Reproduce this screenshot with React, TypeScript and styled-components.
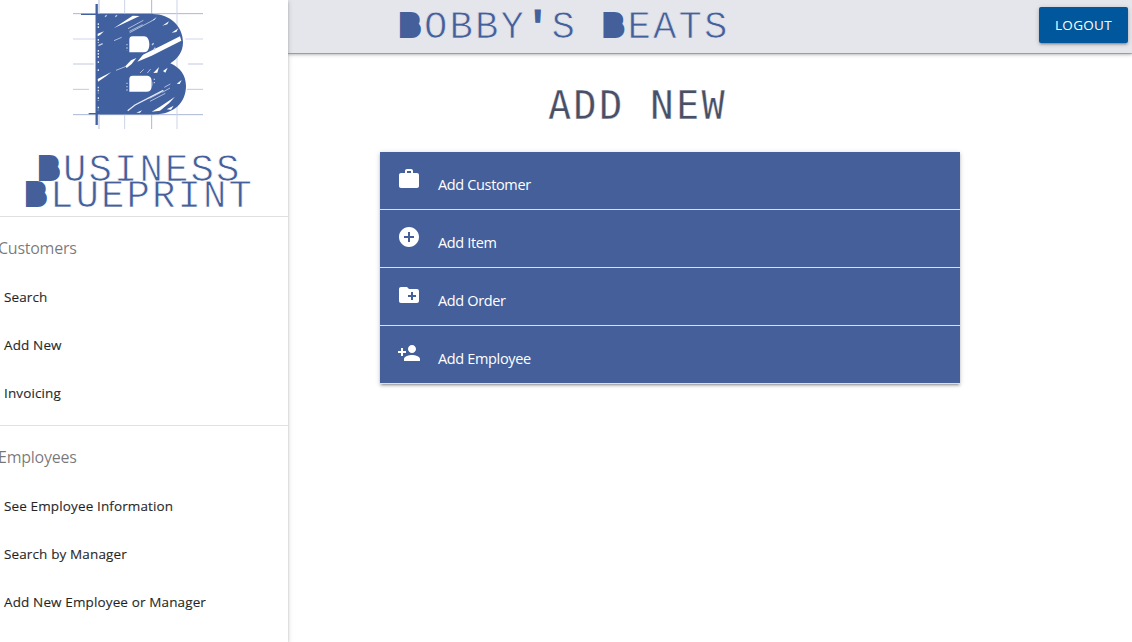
import React from "react";
import styled, { createGlobalStyle } from "styled-components";
import { MdWork, MdAddCircle, MdCreateNewFolder, MdPersonAdd } from "react-icons/md";

const BLUE = "#455f9b";
const HEADER_BG = "#e5e6eb";

const GlobalStyle = createGlobalStyle`
  * { box-sizing: border-box; }
  body { margin: 0; background: #fff; overflow: hidden; font-family: "Open Sans", "Noto Sans", sans-serif; }
`;

const Page = styled.div`
  display: flex;
  width: 100%;
  height: 642px;
  overflow: hidden;
`;

const Sidebar = styled.aside`
  flex: 0 0 288px;
  height: 100%;
  background: #fff;
  z-index: 2;
  box-shadow: 0 2px 2px 0 rgba(0, 0, 0, 0.14), 0 3px 1px -2px rgba(0, 0, 0, 0.12), 0 1px 5px 0 rgba(0, 0, 0, 0.2);
`;

const Brand = styled.div`
  height: 217px;
  border-bottom: 1px solid #e0e0e0;
`;

const Logo = styled.svg`
  display: block;
  width: 160px;
  height: 135px;
  margin-left: 60px;
`;

const Wordmark = styled.div<{ $bg: string }>`
  font-family: "Liberation Mono", monospace;
  font-size: 39px;
  line-height: 25.5px;
  letter-spacing: 2.1px;
  color: ${BLUE};
  white-space: pre;
  -webkit-text-stroke: 0.75px ${(p) => p.$bg};
`;

const Solid = styled.span`
  display: inline-block;
  width: 25px;
  padding-left: 2px;
  font-size: 29px;
  line-height: 0;
  letter-spacing: 0;
  font-weight: 700;
  vertical-align: 3px;
  -webkit-text-stroke: 6px ${BLUE};
`;

const Apostrophe = styled.span`
  font-weight: 700;
  -webkit-text-stroke: 1px ${BLUE};
`;

const BrandLines = styled.div`
  padding: 24px 0 0 25px;
`;

const BrandLine = styled(Wordmark)<{ $indent?: number }>`
  padding-left: ${(p) => p.$indent ?? 0}px;
`;

const NavSection = styled.nav`
  height: 208px;
  padding-top: 7px;

  & + & {
    border-top: 1px solid #e0e0e0;
  }
`;

const NavHeading = styled.div`
  height: 48px;
  line-height: 48px;
  margin-left: -2px;
  font-size: 16px;
  letter-spacing: -0.25px;
  color: rgba(0, 0, 0, 0.54);
`;

const NavLink = styled.a`
  display: block;
  height: 48px;
  padding-left: 4px;
  line-height: 50px;
  font-size: 13.5px;
  letter-spacing: 0.13px;
  white-space: nowrap;
  color: rgba(0, 0, 0, 0.84);
  -webkit-text-stroke: 0.2px rgba(0, 0, 0, 0.8);
`;

const Main = styled.main`
  flex: 1;
  min-width: 0;
`;

const Header = styled.header`
  display: flex;
  justify-content: space-between;
  height: 53px;
  padding: 7px 4px 0 111px;
  background: ${HEADER_BG};
  box-shadow: 0 2px 2px 0 rgba(0, 0, 0, 0.14), 0 1px 0 0 rgba(0, 0, 0, 0.2), 0 1px 5px 0 rgba(0, 0, 0, 0.2);
`;

const Company = styled(Wordmark)`
  line-height: 42px;
`;

const LogoutButton = styled.button`
  width: 89px;
  height: 36px;
  padding: 0;
  border: 0;
  border-radius: 2px;
  background: #01579b;
  color: #fff;
  font: 13.5px/36px "Open Sans", sans-serif;
  letter-spacing: 0.3px;
  box-shadow: 0 2px 2px 0 rgba(0, 0, 0, 0.14), 0 3px 1px -2px rgba(0, 0, 0, 0.12), 0 1px 5px 0 rgba(0, 0, 0, 0.2);
`;

const Title = styled.h1`
  margin: 25px 0 0 260px;
  height: 57px;
  font: 400 38.5px/55px "DejaVu Sans Mono", monospace;
  letter-spacing: 2.4px;
  color: #484f66;
  white-space: pre;
  -webkit-text-stroke: 0.3px #fff;
`;

const Collection = styled.div`
  width: 580px;
  margin: 17px 0 0 92px;
  box-shadow: 0 2px 2px 0 rgba(0, 0, 0, 0.14), 0 3px 1px -2px rgba(0, 0, 0, 0.12), 0 1px 5px 0 rgba(0, 0, 0, 0.2);
`;

const Item = styled.a`
  display: flex;
  height: 58px;
  padding: 15px 17px 0;
  gap: 17px;
  background: ${BLUE};
  border-bottom: 1px solid #e0e0e0;
  color: #fff;
`;

const ItemLabel = styled.span`
  padding-top: 7px;
  font-size: 14.5px;
  line-height: 22px;
  letter-spacing: -0.35px;
`;

const items = [
  { label: "Add Customer", Icon: MdWork },
  { label: "Add Item", Icon: MdAddCircle },
  { label: "Add Order", Icon: MdCreateNewFolder },
  { label: "Add Employee", Icon: MdPersonAdd },
];

const sections = [
  { heading: "Customers", links: ["Search", "Add New", "Invoicing"] },
  { heading: "Employees", links: ["See Employee Information", "Search by Manager", "Add New Employee or Manager"] },
];

const BlueprintLogo = () => (
  <Logo viewBox="0 0 480 405" fill="none">
    <g stroke="#a9b6d6" strokeWidth="3">
      <path d="M39 41H429M39 344H429" />
      <path d="M39 117H105M376 117H429" stroke="#dfe4f1" strokeWidth="5" />
      <path d="M39 192H102M384 192H429M39 268H87M381 268H429" stroke="#bfc9e2" />
      <path d="M117 0V387" stroke="#d2d9ea" strokeWidth="5" />
      <path d="M194 0V387M351 0V387" stroke="#cbd3e7" />
      <path d="M275 0V387" />
    </g>
    <path
      fill="#4060a0"
      fillRule="evenodd"
      d="M108 42H278C331 42 369 80 369 127C369 154 355 175 331 190C361 203 378 227 378 258C378 308 341 343 284 343H108Z
      M208 119Q208 109 218 109H252C262 109 268 119 268 133C268 147 263 157 252 157H208Z
      M208 237Q208 227 218 227H262C272 227 277 238 277 251C277 265 271 275 261 275H208Z"
    />
    <path d="M110 12V375" stroke="#4060a0" strokeWidth="7" />
    <path d="M63 43H278M86 341H284" stroke="#4060a0" strokeWidth="4" />
    <g fill="#fff">
      <path d="M161 85L218 47L239 48L207 63Z" />
      <path d="M232 185L249 164L270 154L302 138L360 109L364 122L309 150L275 167Z" />
      <path d="M196 199L213 181L229 174L215 192L200 204Z" />
      <path d="M275 335L299 321L345 290L328 309L300 332Z" />
      <path d="M113 237L154 216L139 228L114 245Z" />
      <path d="M113 101L132 94L120 105L113 109Z" />
      <path d="M307 77L327 64L322 73Z" />
      <path d="M335 98L355 85L349 96Z" />
      <path d="M280 219L297 201L292 218Z" />
      <path d="M309 213L323 203L316 218Z" />
      <path d="M350 251L365 240L359 252Z" />
      <path d="M320 328L341 317L333 329Z" />
      <path d="M273 64L290 51L283 60Z" />
      <path d="M229 338L246 331L240 338Z" />
    </g>
    <g stroke="#c5cfe6" strokeWidth="2.5">
      <path d="M203 332L225 315L310 271" stroke="#e8ecf6" strokeWidth="4" />
      <path d="M270 304L316 280M269 295L305 276M204 86L250 61M209 98L277 62M208 94L248 74" />
      <path d="M162 122L185 112M168 211L198 199M240 219L251 208M262 219L272 207M313 262L331 252M307 277L330 264" />
      <path d="M115 137L128 131M135 50L140 46M166 50L171 46M281 150L286 143M276 135L281 130" strokeWidth="4" />
    </g>
    <path
      d="M115 70V84M115 117V128M115 150V174M115 184V190M115 208V214M115 260V280M115 292V302M115 320V331"
      stroke="#dbe2f0"
      strokeWidth="4"
      strokeDasharray="5 4"
    />
    <path d="M201 132V153M201 248V273M283 236V250" stroke="#b4c1df" strokeWidth="4" strokeDasharray="4 6" />
  </Logo>
);

export default function App() {
  return (
    <Page>
      <GlobalStyle />
      <Sidebar>
        <Brand>
          <BlueprintLogo />
          <BrandLines>
            <BrandLine $bg="#fff" $indent={13}>
              <Solid>B</Solid>USINESS
            </BrandLine>
            <BrandLine $bg="#fff">
              <Solid>B</Solid>LUEPRINT
            </BrandLine>
          </BrandLines>
        </Brand>
        {sections.map((section) => (
          <NavSection key={section.heading}>
            <NavHeading>{section.heading}</NavHeading>
            {section.links.map((link) => (
              <NavLink key={link}>{link}</NavLink>
            ))}
          </NavSection>
        ))}
      </Sidebar>
      <Main>
        <Header>
          <Company $bg={HEADER_BG}>
            <Solid>B</Solid>OBBY<Apostrophe>'</Apostrophe>S <Solid>B</Solid>EATS
          </Company>
          <LogoutButton>LOGOUT</LogoutButton>
        </Header>
        <Title>ADD NEW</Title>
        <Collection>
          {items.map(({ label, Icon }) => (
            <Item key={label}>
              <Icon size={24} />
              <ItemLabel>{label}</ItemLabel>
            </Item>
          ))}
        </Collection>
      </Main>
    </Page>
  );
}
